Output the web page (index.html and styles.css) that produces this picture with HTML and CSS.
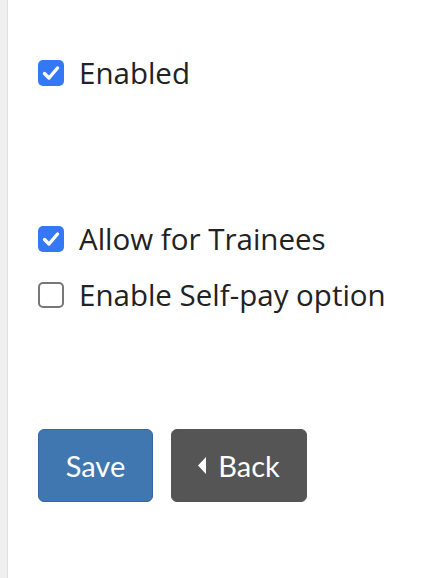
FILE: index.html
```html
<!DOCTYPE html>
<html>
<head>
<meta charset="utf-8">
<link rel="stylesheet" href="styles.css">
</head>
<body>
<div class="page">
  <div class="strip"></div>
  <form class="form">
    <label class="row row-first">
      <span class="box checked"><svg viewBox="0 0 26 26" width="26" height="26"><path d="M6.5 13.5 L11 18 L19.5 8" fill="none" stroke="#fff" stroke-width="3.4" stroke-linecap="round" stroke-linejoin="round"/></svg></span>
      <span class="text">Enabled</span>
    </label>
    <div class="group">
      <label class="row">
        <span class="box checked"><svg viewBox="0 0 26 26" width="26" height="26"><path d="M6.5 13.5 L11 18 L19.5 8" fill="none" stroke="#fff" stroke-width="3.4" stroke-linecap="round" stroke-linejoin="round"/></svg></span>
        <span class="text">Allow for Trainees</span>
      </label>
      <label class="row">
        <span class="box"></span>
        <span class="text">Enable Self-pay option</span>
      </label>
    </div>
    <div class="actions">
      <button type="button" class="btn btn-save">Save</button>
      <button type="button" class="btn btn-back"><svg class="caret" viewBox="0 0 8 17" width="8" height="17"><path d="M8 0 L0 8.5 L8 17 Z" fill="#fff"/></svg>Back</button>
    </div>
  </form>
</div>
</body>
</html>
```

FILE: styles.css
```css
html, body {
  margin: 0;
  padding: 0;
  background: #fff;
}
.page {
  display: flex;
  min-height: 578px;
}
.strip {
  width: 7px;
  background: #efefef;
  border-right: 1px solid #e0e0e0;
  flex: none;
}
.form {
  padding-left: 30px;
  padding-top: 53px;
  font-family: "Open Sans", "Lato", sans-serif;
  color: #222;
  font-size: 29.5px;
}
.row {
  display: flex;
  align-items: center;
  height: 40px;
  gap: 15px;
}
.group {
  margin-top: 126px;
  display: flex;
  flex-direction: column;
  gap: 16px;
}
.box {
  width: 22px;
  height: 22px;
  border: 2px solid #777;
  border-radius: 5px;
  box-sizing: content-box;
  display: flex;
  align-items: center;
  justify-content: center;
  flex: none;
}
.box.checked {
  width: 26px;
  height: 26px;
  border: none;
  background: #3478f6;
}
.text {
  line-height: 1;
}
.actions {
  margin-top: 114px;
  display: flex;
  gap: 18px;
}
.btn {
  height: 73px;
  border-radius: 6px;
  font-family: "Lato", "Open Sans", sans-serif;
  font-size: 29px;
  color: #fff;
  display: flex;
  align-items: center;
  justify-content: center;
  padding: 0;
  cursor: pointer;
}
.btn-save {
  width: 115px;
  background: #4077b0;
  border: 1px solid #3867a0;
}
.btn-back {
  width: 136px;
  background: #555;
  border: 1px solid #555;
  gap: 12px;
}
.caret {
  display: block;
}
```
